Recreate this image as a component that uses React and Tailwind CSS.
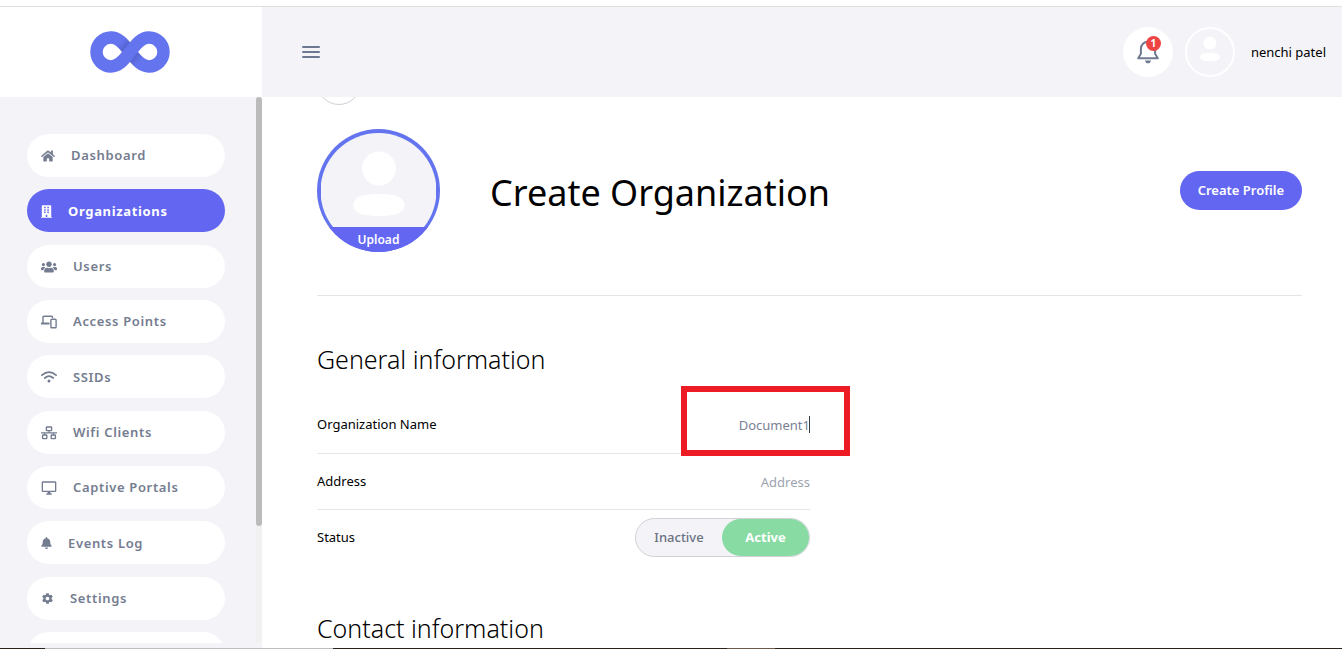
import React, { useState } from "react";
import { FaHome, FaBuilding, FaUsers, FaBell } from "react-icons/fa";
import { MdOutlineDesktopWindows } from "react-icons/md";
import { IoMdSettings } from "react-icons/io";

function LanIcon({ className }) {
  return (
    <svg viewBox="0 0 16 16" className={className} fill="none" stroke="currentColor" strokeWidth="1.4" aria-hidden="true">
      <rect x="5.4" y="2" width="5.2" height="3.6" rx="0.5" />
      <rect x="1.6" y="10" width="4.2" height="3.6" rx="0.5" />
      <rect x="10.2" y="10" width="4.2" height="3.6" rx="0.5" />
      <path d="M0 7.9H16M8 5.6V7.9M3.7 7.9V10M12.3 7.9V10" strokeWidth="1.1" />
    </svg>
  );
}

function DevicesIcon({ className }) {
  return (
    <svg viewBox="0 0 16 16" className={className} fill="none" stroke="currentColor" strokeWidth="1.4" aria-hidden="true">
      <path d="M2 9.5V3.2Q2 2.2 3 2.2H10.5Q11.5 2.2 11.5 3.2V4" />
      <path d="M0 9.5H8.5" strokeWidth="2" />
      <rect x="9.9" y="5.2" width="5.2" height="8.6" rx="0.8" />
    </svg>
  );
}

function WifiIcon({ className }) {
  return (
    <svg viewBox="0 0 16 16" className={className} fill="none" stroke="currentColor" strokeWidth="1.7" strokeLinecap="round" aria-hidden="true">
      <path d="M0.9 6.2Q8 0.2 15.1 6.2" />
      <path d="M3.8 9Q8 5.4 12.2 9" />
      <circle cx="8" cy="12" r="1.5" fill="currentColor" stroke="none" />
    </svg>
  );
}

function BellOutline({ className }) {
  return (
    <svg viewBox="0 0 22 24" className={className} fill="none" stroke="currentColor" strokeWidth="2" strokeLinejoin="round" aria-hidden="true">
      <path d="M1.2 18.2L3.9 13.8V8.8C3.9 4.5 7 1.8 11 1.8S18.1 4.5 18.1 8.8V13.8L20.8 18.2Z" />
      <path d="M8 20.5H14C13.6 22.5 12.5 23.3 11 23.3S8.4 22.5 8 20.5Z" fill="currentColor" stroke="none" />
    </svg>
  );
}

const navItems = [
  { label: "Dashboard", Icon: FaHome, iconClass: "w-3.5 h-3.5" },
  { label: "Organizations", Icon: FaBuilding, iconClass: "w-[11px] h-[13px]", active: true },
  { label: "Users", Icon: FaUsers, iconClass: "w-4 h-4" },
  { label: "Access Points", Icon: DevicesIcon, iconClass: "w-4 h-4" },
  { label: "SSIDs", Icon: WifiIcon, iconClass: "w-4 h-4" },
  { label: "Wifi Clients", Icon: LanIcon, iconClass: "w-4 h-4" },
  { label: "Captive Portals", Icon: MdOutlineDesktopWindows, iconClass: "w-4 h-4" },
  { label: "Events Log", Icon: FaBell, iconClass: "w-[11px] h-3" },
  { label: "Settings", Icon: IoMdSettings, iconClass: "w-[13px] h-[13px]" },
];

function Logo() {
  return (
    <svg viewBox="0 0 80 42" className="h-[42px] w-20" fill="none" role="img" aria-label="Logo">
      <defs>
        <linearGradient id="fold-a" gradientUnits="userSpaceOnUse" x1="29" y1="9" x2="39" y2="18">
          <stop offset="0.2" stopColor="#6474ee" />
          <stop offset="1" stopColor="#4f5bc0" />
        </linearGradient>
        <linearGradient id="fold-b" gradientUnits="userSpaceOnUse" x1="51" y1="33" x2="41" y2="24">
          <stop offset="0.2" stopColor="#6474ee" />
          <stop offset="1" stopColor="#4f5bc0" />
        </linearGradient>
      </defs>
      <g strokeWidth="12.4">
        <path d="M21 6.5C30 6.5 35 15 40 21" stroke="url(#fold-a)" />
        <path d="M59 35.5C50 35.5 45 27 40 21" stroke="url(#fold-b)" />
        <path
          d="M21.5 6.5H21A14.5 14.5 0 0 0 21 35.5C30 35.5 35 27 40 21S50 6.5 59 6.5A14.5 14.5 0 0 1 59 35.5H58.5"
          stroke="#6474ee"
        />
      </g>
    </svg>
  );
}

function Person({ className }) {
  return (
    <svg viewBox="0 0 52 66" className={className} fill="#fff" aria-hidden="true">
      <circle cx="26" cy="17.5" r="17" />
      <path d="M26 43C40 43 51.5 45 51.5 54S40 65 26 65S0.5 63 0.5 54S12 43 26 43Z" />
    </svg>
  );
}

function Sidebar() {
  return (
    <aside className="flex w-[262px] shrink-0 flex-col bg-[#f3f3f8]">
      <a href="#home" className="flex h-[90px] shrink-0 items-center justify-center bg-white pr-0.5">
        <Logo />
      </a>
      <div className="mb-[5px] flex min-h-0 flex-1">
        <nav className="flex-1 overflow-hidden pt-[37px] pr-[31px] pl-[27px]">
          <ul className="flex h-[541px] flex-col justify-between">
            {navItems.map(({ label, Icon, iconClass, active }) => (
              <li key={label}>
                <a
                  href="#nav"
                  className={
                    active
                      ? "flex h-[43px] items-center gap-4 rounded-full bg-[#6366f1] px-3.5 pt-0.5 text-[13px] font-bold tracking-wider text-white"
                      : "flex h-[43px] items-center gap-4 rounded-full bg-white px-3.5 pt-px text-[13px] font-semibold tracking-wider text-[#747c90]"
                  }
                >
                  <Icon className={iconClass} />
                  {label}
                </a>
              </li>
            ))}
            <li>
              <a href="#more" aria-label="More" className="block h-[43px] rounded-full bg-white" />
            </li>
          </ul>
        </nav>
        <div className="w-1.5 bg-[#f1f1f1]">
          <div className="h-[429px] rounded-full bg-[#bbbbbb]" />
        </div>
      </div>
    </aside>
  );
}

function Header() {
  return (
    <header className="flex h-[90px] shrink-0 items-center bg-[#f3f3f8] pr-4 pl-10">
      <button type="button" aria-label="Toggle menu" className="flex w-[18px] flex-col gap-[3px]">
        <span className="h-0.5 rounded-full bg-[#6b7890]" />
        <span className="h-0.5 rounded-full bg-[#6b7890]" />
        <span className="h-0.5 rounded-full bg-[#6b7890]" />
      </button>
      <button
        type="button"
        aria-label="Notifications"
        className="relative ml-auto flex size-[50px] items-center justify-center rounded-full bg-white"
      >
        <BellOutline className="h-6 w-[22px] text-[#6f7a90]" />
        <span className="absolute top-[9px] right-3 flex size-[15px] items-center justify-center rounded-full bg-[#ef4444] text-[10px] font-bold text-white">
          1
        </span>
      </button>
      <span className="ml-3 flex size-[50px] items-center justify-center rounded-full border-2 border-white">
        <Person className="mb-1.5 h-[26px] w-5" />
      </span>
      <span className="ml-4 pt-0.5 text-[13px] text-black">nenchi patel</span>
    </header>
  );
}

export default function App() {
  const [name, setName] = useState("Document1");
  const [address, setAddress] = useState("");
  return (
    <div className="flex h-screen flex-col overflow-hidden bg-white pt-1.5 font-['Noto_Sans',sans-serif] text-black">
      <div className="flex min-h-0 flex-1 border-t border-[#e0e0e0]">
        <Sidebar />
        <div className="flex min-w-0 flex-1 flex-col">
          <Header />
          <main className="min-h-0 flex-1 overflow-hidden pr-10 pl-[55px]">
            <button
              type="button"
              aria-label="Back"
              className="-mt-9 block size-11 rounded-full border border-[#d1d1d6]"
            />
            <section className="mt-6 flex items-center border-b border-[#e5e5e5] pb-[43px]">
              <div className="flex size-[123px] flex-col items-center overflow-hidden rounded-full bg-[#6474ee] p-1">
                <div className="flex h-[94px] w-[115px] shrink-0 justify-center bg-[#f3f3f8] pt-[18px] [clip-path:circle(58px_at_50%_58px)]">
                  <Person className="h-[66px] w-[52px]" />
                </div>
                <button
                  type="button"
                  className="h-[25px] w-[123px] shrink-0 bg-[#6366f1] text-xs font-semibold text-white"
                >
                  Upload
                </button>
              </div>
              <h1 className="ml-[50px] pt-1 text-4xl font-[380]">Create Organization</h1>
              <button
                type="button"
                className="ml-auto h-[39px] rounded-full bg-[#6366f1] px-[18px] text-[13px] font-semibold text-white"
              >
                Create Profile
              </button>
            </section>

            <div className="w-[493px]">
              <h2 className="mt-[47px] text-[25px] leading-8 font-light">General information</h2>
              <div className="relative mt-[21px] flex h-[58px] items-center justify-between border-b border-[#e5e5e5] text-[13px]">
                <label htmlFor="org-name">Organization Name</label>
                <input
                  id="org-name"
                  value={name}
                  onChange={(e) => setName(e.target.value)}
                  className="h-8 w-48 text-right text-[#7a8194] outline-none"
                />
                <span className="absolute right-0 h-[17px] w-px bg-[#333a4a]" />
                <span className="pointer-events-none absolute -top-[10px] -right-10 h-[70px] w-[169px] border-6 border-[#ed1c24]" />
              </div>
              <div className="flex h-14 items-center justify-between border-b border-[#e5e5e5] text-[13px]">
                <label htmlFor="org-address">Address</label>
                <input
                  id="org-address"
                  value={address}
                  onChange={(e) => setAddress(e.target.value)}
                  placeholder="Address"
                  className="h-8 w-48 text-right text-[#7a8194] outline-none placeholder:text-[#9ca3af]"
                />
              </div>
              <div className="flex h-[55px] items-center justify-between text-[13px]">
                <span>Status</span>
                <div className="flex h-[39px] w-[175px] rounded-full border border-[#d1d1d6] bg-[#f3f3f8]">
                  <button type="button" className="flex-1 font-medium text-[#6b7280]">
                    Inactive
                  </button>
                  <button type="button" className="w-[87px] rounded-full bg-[#88dba3] font-bold text-white">
                    Active
                  </button>
                </div>
              </div>
              <h2 className="mt-[47px] text-[25px] leading-8 font-light">Contact information</h2>
            </div>
          </main>
        </div>
      </div>
      <div className="flex h-px shrink-0 bg-[#2b211b]">
        <span className="w-[45px]" />
        <span className="w-72 bg-[#bdbdbd]" />
        <span className="w-[394px]" />
        <span className="w-12 bg-[#6b5a4c]" />
      </div>
    </div>
  );
}
